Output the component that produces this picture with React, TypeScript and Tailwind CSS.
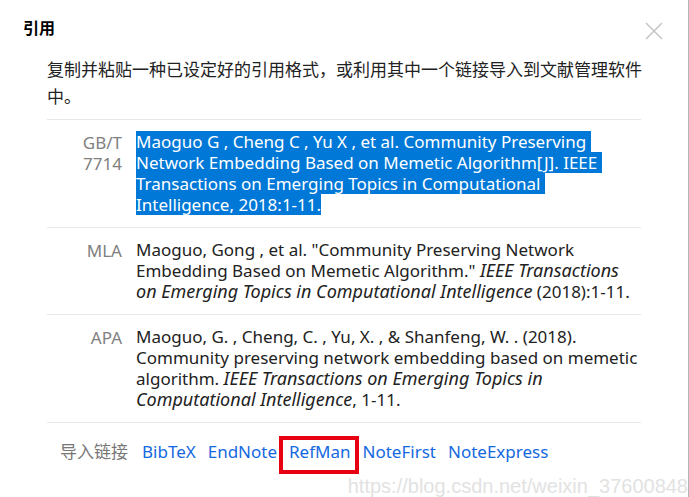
import type { ReactNode } from "react";

const selectedLines = [
  "Maoguo G , Cheng C , Yu X , et al. Community Preserving ",
  "Network Embedding Based on Memetic Algorithm[J]. IEEE ",
  "Transactions on Emerging Topics in Computational ",
  "Intelligence, 2018:1-11.",
];

function CitationRow({ label, children }: { label: ReactNode; children: ReactNode }) {
  return (
    <tr className="border-y border-[#e8e8e8] align-top">
      <th scope="row" className="w-[75px] pt-3 text-right font-normal text-[#808080]">
        {label}
      </th>
      <td className="whitespace-nowrap pb-3 pl-[14px] pt-[11px]">{children}</td>
    </tr>
  );
}

function Journal({ children }: { children: ReactNode }) {
  return <i className="text-[18px] leading-none">{children}</i>;
}

function ImportLink({ children }: { children: ReactNode }) {
  return (
    <a href="#" className="text-[#1468e0]">
      {children}
    </a>
  );
}

export default function App() {
  return (
    <main className="relative min-h-screen border-r border-[#b4b4b4] bg-white font-['Noto_Sans','Noto_Sans_CJK_SC',sans-serif] text-[17px] leading-[21px] text-[#222]">
      <header className="flex items-start justify-between pl-[23px] pr-[25px] pt-[18px]">
        <h1 className="text-[16px] font-bold text-black">引用</h1>
        <button type="button" aria-label="关闭" className="mt-1 text-[#c4c4c4]">
          <svg width="18" height="18" viewBox="0 0 18 18" fill="none" stroke="currentColor" strokeWidth="1.5">
            <path d="M1 1 17 17M17 1 1 17" />
          </svg>
        </button>
      </header>
      <section className="pl-[47px] pr-[47px]">
        <p className="-mr-4 mb-[9px] mt-4 leading-[27px]">
          复制并粘贴一种已设定好的引用格式，或利用其中一个链接导入到文献管理软件
          <br />
          中。
        </p>
        <table className="w-full border-collapse">
          <tbody>
            <CitationRow label={<>GB/T<br />7714</>}>
              {selectedLines.map((line) => (
                <span key={line} className="block w-fit whitespace-pre bg-[#0078d7] text-white">
                  {line}
                </span>
              ))}
            </CitationRow>
            <CitationRow label="MLA">
              Maoguo, Gong , et al. "Community Preserving Network
              <br />
              Embedding Based on Memetic Algorithm." <Journal>IEEE Transactions</Journal>
              <br />
              <Journal>on Emerging Topics in Computational Intelligence</Journal> (2018):1-11.
            </CitationRow>
            <CitationRow label="APA">
              Maoguo, G. , Cheng, C. , Yu, X. , &amp; Shanfeng, W. . (2018).
              <br />
              Community preserving network embedding based on memetic
              <br />
              algorithm. <Journal>IEEE Transactions on Emerging Topics in</Journal>
              <br />
              <Journal>Computational Intelligence</Journal>, 1-11.
            </CitationRow>
          </tbody>
        </table>
        <nav className="flex items-center pl-[13px] pt-[18px]">
          <span className="mr-[14px] text-[#777]">导入链接</span>
          <div className="flex items-center gap-3">
            <ImportLink>BibTeX</ImportLink>
            <ImportLink>EndNote</ImportLink>
            <span className="relative">
              <ImportLink>RefMan</ImportLink>
              <span className="absolute -left-[10px] -top-[5px] h-[38px] w-20 border-4 border-[#e60012]" />
            </span>
            <ImportLink>NoteFirst</ImportLink>
            <ImportLink>NoteExpress</ImportLink>
          </div>
        </nav>
      </section>
      <span className="absolute bottom-0 right-0 font-['Liberation_Sans',sans-serif] text-[20px] text-[#e2e2e2]">
        https://blog.csdn.net/weixin_37600848
      </span>
    </main>
  );
}
